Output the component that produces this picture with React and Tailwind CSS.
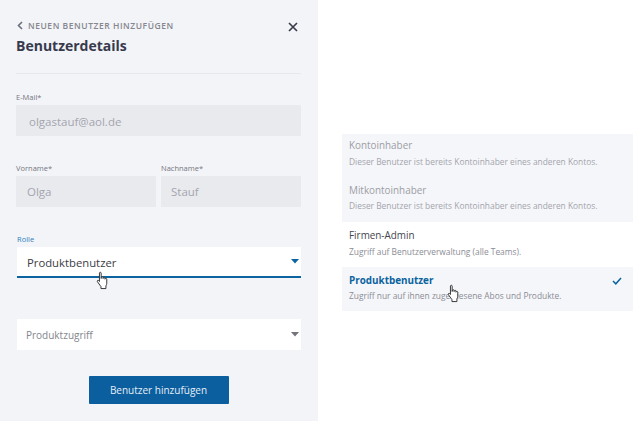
function Hand({ className }) {
  return (
    <svg className={className} width="14" height="19" viewBox="0 0 13 17">
      <path d="M3.2 1.6c0-1 1.6-1 1.6 0v5l.2-1c.2-.9 1.5-.8 1.6.1v1l.2-.7c.3-.8 1.5-.6 1.5.3v1l.3-.5c.4-.6 1.4-.3 1.4.5v3.7c0 1-.3 1.7-.8 2.5v2.5H4.6v-1.8L1.3 9.6c-.5-.8.4-1.7 1.2-1l.7.8z" fill="#fff" stroke="#333" strokeWidth="0.9" strokeLinejoin="round" />
    </svg>
  );
}

function Caret({ color }) {
  return (
    <svg width="8" height="5" viewBox="0 0 8 5"><path d="M0 0h8L4 4.5z" fill={color} /></svg>
  );
}

function Option({ title, desc, titleClass, descClass, bg, box, gap, children }) {
  return (
    <div className={`relative pl-[7px] pr-4 ${box} ${bg}`}>
      <div className={`text-[9.9px] leading-[16px] ${titleClass}`}>{title}</div>
      <div className={`${gap} whitespace-nowrap text-[8.4px] leading-[14px] ${descClass}`}>{desc}</div>
      {children}
    </div>
  );
}

export default function App() {
  return (
    <div className="flex h-[421px] w-[633px] overflow-hidden bg-white font-['Open_Sans','Noto_Sans',sans-serif]">
      <div className="w-[318px] shrink-0 bg-[#f3f4f8] pl-4 pr-[17px] pt-[19px]">
        <div className="flex items-start justify-between pr-[2px]">
          <div>
            <div className="flex h-[13px] items-center">
              <svg width="6" height="9" viewBox="0 0 6 9" className="ml-[1px]"><path d="M5 1L1.5 4.5 5 8" fill="none" stroke="#6d6f7a" strokeWidth="1.6" /></svg>
              <span className="ml-[5px] text-[8.5px] font-semibold leading-[13px] tracking-[0.55px] text-[#85868f]">NEUEN BENUTZER HINZUFÜGEN</span>
            </div>
            <div className="mt-[4px] text-[14px] font-bold leading-[20px] text-[#373a4d]">Benutzerdetails</div>
          </div>
          <svg width="10" height="10" viewBox="0 0 10 10" className="mt-[3px] mr-[1px]"><path d="M1 1l8 8M9 1l-8 8" stroke="#3a3c4a" strokeWidth="1.7" /></svg>
        </div>
        <div className="mt-[17px] h-px bg-[#e7e8ed]" />
        <div className="mt-[17px] text-[7.5px] leading-[12px] text-[#75767f]">E-Mail*</div>
        <div className="mt-[2px] flex h-[31px] items-center rounded-[1px] bg-[#e9eaee] pl-[13px] pt-[2px] text-[11.5px] text-[#a4a5ae]">olgastauf@aol.de</div>
        <div className="mt-[26px] flex gap-[5px]">
          <div className="flex-1">
            <div className="text-[7.5px] leading-[12px] text-[#75767f]">Vorname*</div>
            <div className="mt-[2px] flex h-[31px] items-center bg-[#e9eaee] pl-[11px] pt-[1px] text-[11.5px] text-[#a4a5ae]">Olga</div>
          </div>
          <div className="flex-1">
            <div className="text-[7.5px] leading-[12px] text-[#75767f]">Nachname*</div>
            <div className="mt-[2px] flex h-[31px] items-center bg-[#e9eaee] pl-[10px] pt-[1px] text-[11.5px] text-[#a4a5ae]">Stauf</div>
          </div>
        </div>
        <div className="mt-[26px] pl-px text-[7.5px] leading-[12px] text-[#2f7fbe]">Rolle</div>
        <div className="relative mt-[2px] ml-px flex h-[31px] items-center justify-between border-b-2 border-[#0b639f] bg-white pl-[10px] pr-[2px] text-[11.3px] text-[#3c3d45]">
          <span className="pt-[3px]">Produktbenutzer</span>
          <Caret color="#0b639f" />
          <Hand className="absolute left-[79px] top-[24px]" />
        </div>
        <div className="mt-[41px] ml-px flex h-[31px] items-center justify-between bg-white pl-[9px] pr-[2px] text-[10px] text-[#84858d]">
          <span className="pt-[1px]">Produktzugriff</span>
          <Caret color="#72737b" />
        </div>
        <div className="mt-[26px] flex justify-center">
          <div className="flex h-[28px] w-[140px] items-center justify-center rounded-[1px] bg-[#0b5f9f] text-[10px] text-[#e6eef5]">Benutzer hinzufügen</div>
        </div>
      </div>
      <div className="flex-1 pl-[24px] pt-[134px]">
        <Option box="h-[44px] pt-[3px]" gap="mt-[2px]" bg="bg-[#f5f6f9]" title="Kontoinhaber" titleClass="text-[#9c9da6]" descClass="text-[#a3a4ad]" desc="Dieser Benutzer ist bereits Kontoinhaber eines anderen Kontos." />
        <Option box="h-[44px] pt-[4px]" gap="mt-[1px]" bg="bg-[#f5f6f9]" title="Mitkontoinhaber" titleClass="text-[#9c9da6]" descClass="text-[#a3a4ad]" desc="Dieser Benutzer ist bereits Kontoinhaber eines anderen Kontos." />
        <Option box="h-[45px] pt-[5px]" gap="mt-[2px]" bg="bg-white" title="Firmen-Admin" titleClass="text-[#43444e]" descClass="text-[#8b8c95]" desc="Zugriff auf Benutzerverwaltung (alle Teams)." />
        <Option box="h-[44px] pt-[5px]" gap="mt-[1px]" bg="bg-[#f5f6f9]" title="Produktbenutzer" titleClass="font-bold text-[#0b639f]" descClass="text-[#8b8c95]" desc="Zugriff nur auf ihnen zugewiesene Abos und Produkte.">
          <svg width="10" height="8" viewBox="0 0 10 8" className="absolute right-[11px] top-[10px]"><path d="M1 4l2.8 2.8L9 1" fill="none" stroke="#0b639f" strokeWidth="1.5" /></svg>
          <Hand className="absolute left-[105px] top-[17px]" />
        </Option>
      </div>
    </div>
  );
}
